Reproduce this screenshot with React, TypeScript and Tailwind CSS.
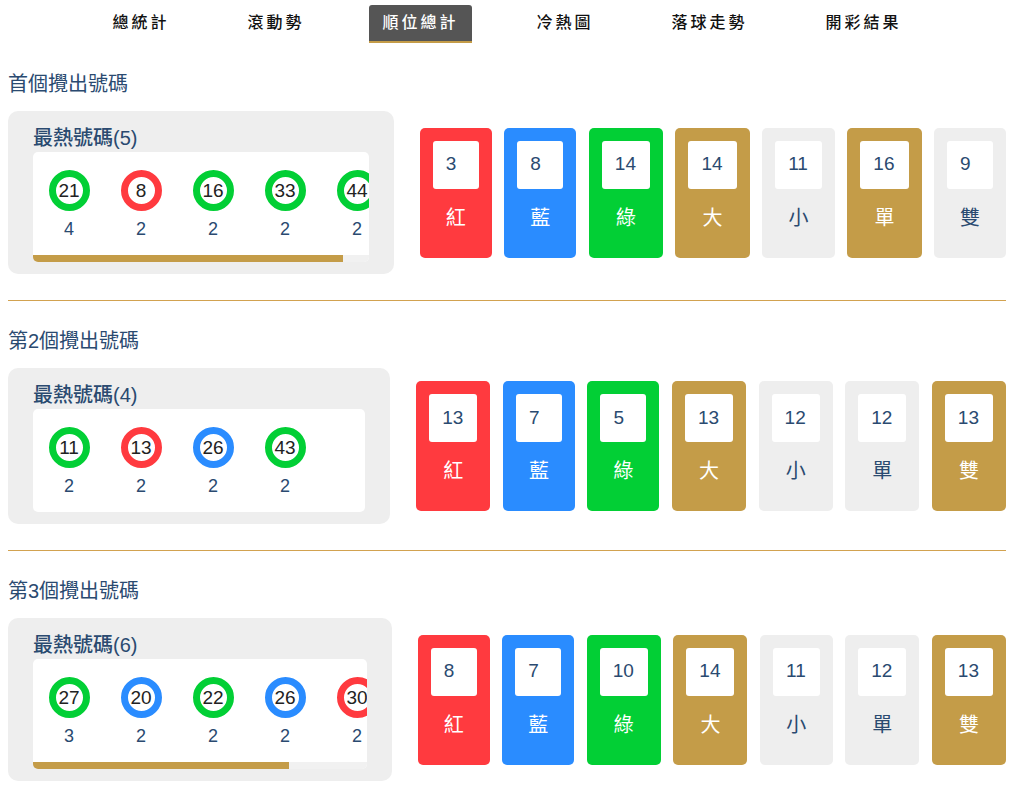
import React from "react";

type Tone = "red" | "blue" | "green" | "gold" | "gray";

const ringClass: Record<string, string> = {
  red: "border-[#ff3a3f]",
  blue: "border-[#2a8cff]",
  green: "border-[#02cf35]",
};

const cardClass: Record<Tone, string> = {
  red: "bg-[#ff3a3f] text-white",
  blue: "bg-[#2a8cff] text-white",
  green: "bg-[#02cf35] text-white",
  gold: "bg-[#c49c48] text-white",
  gray: "bg-[#eeeeee] text-[#2a4a70]",
};

interface Ball {
  n: number;
  c: "red" | "blue" | "green";
  times: number;
}

interface Section {
  title: string;
  balls: Ball[];
  cards: { label: string; value: number; tone: Tone }[];
}

const labels = ["紅", "藍", "綠", "大", "小", "單", "雙"];

function makeCards(values: number[], tones: Tone[]) {
  return values.map((v, i) => ({ label: labels[i], value: v, tone: tones[i] }));
}

const sections: Section[] = [
  {
    title: "首個攪出號碼",
    balls: [
      { n: 21, c: "green", times: 4 },
      { n: 8, c: "red", times: 2 },
      { n: 16, c: "green", times: 2 },
      { n: 33, c: "green", times: 2 },
      { n: 44, c: "green", times: 2 },
    ],
    cards: makeCards([3, 8, 14, 14, 11, 16, 9], ["red", "blue", "green", "gold", "gray", "gold", "gray"]),
  },
  {
    title: "第2個攪出號碼",
    balls: [
      { n: 11, c: "green", times: 2 },
      { n: 13, c: "red", times: 2 },
      { n: 26, c: "blue", times: 2 },
      { n: 43, c: "green", times: 2 },
    ],
    cards: makeCards([13, 7, 5, 13, 12, 12, 13], ["red", "blue", "green", "gold", "gray", "gray", "gold"]),
  },
  {
    title: "第3個攪出號碼",
    balls: [
      { n: 27, c: "green", times: 3 },
      { n: 20, c: "blue", times: 2 },
      { n: 22, c: "green", times: 2 },
      { n: 26, c: "blue", times: 2 },
      { n: 30, c: "red", times: 2 },
      { n: 35, c: "red", times: 2 },
    ],
    cards: makeCards([8, 7, 10, 14, 11, 12, 13], ["red", "blue", "green", "gold", "gray", "gray", "gold"]),
  },
];

const tabs = ["總統計", "滾動勢", "順位總計", "冷熱圖", "落球走勢", "開彩結果"];

// scroll strip: balls row clipped, thumb width = visible / total
function HotPanel({ balls }: { balls: Ball[] }) {
  const total = balls.length * 72;
  const overflow = total > 332;
  return (
    <div className="min-w-0 flex-1 rounded-[10px] bg-[#eeeeee] px-[25px] pt-[15px] pb-3">
      <div className="mb-[2px] text-[20px] leading-[24px] font-medium text-[#2a4a70]">最熱號碼({balls.length})</div>
      <div className="overflow-hidden rounded-[5px] bg-white">
        <div className="flex pt-[18px] pb-[16px]">
          {balls.map((b, i) => (
            <div key={i} className="flex w-[72px] shrink-0 flex-col items-center">
              <div
                className={`flex h-[41px] w-[41px] items-center justify-center rounded-full border-[7px] bg-white text-[19px] leading-none text-[#222] ${ringClass[b.c]}`}
              >
                {b.n}
              </div>
              <div className="mt-[8px] text-[18px] leading-[20px] text-[#2a4a70]">{b.times}</div>
            </div>
          ))}
        </div>
        {overflow && (
          <div className="h-[7px] bg-[#f1f1f1]">
            <div className="h-full bg-[#c49c48]" style={{ width: `${(332 / total) * 100}%` }} />
          </div>
        )}
      </div>
    </div>
  );
}

export default function App() {
  return (
    <div
      className="min-h-screen bg-white pl-2 pr-[17px]"
      style={{ fontFamily: '"Liberation Sans", "Noto Sans CJK TC", sans-serif' }}
    >
      <nav className="flex justify-center gap-[52px] pt-[5px]">
        {tabs.map((t) => {
          const active = t === "順位總計";
          return (
            <div
              key={t}
              className={
                active
                  ? "rounded-t-[3px] border-b-2 border-[#c49c48] bg-[#555555] px-[13px] py-[6px] text-[16px] leading-[24px] font-medium tracking-[3px] text-white"
                  : "border-b-2 border-transparent px-[13px] py-[6px] text-[16px] leading-[24px] font-medium tracking-[3px] text-[#111]"
              }
            >
              {t}
            </div>
          );
        })}
      </nav>

      {sections.map((s, si) => (
        <section key={si}>
          <h2 className={`${si === 0 ? "mt-[27px]" : "mt-[26px]"} mb-[13px] text-[20px] leading-[28px] text-[#2a4a70]`}>
            {s.title}
          </h2>
          <div className="flex items-center gap-[26px]">
            <HotPanel balls={s.balls} />
            <div className="flex gap-[12.5px]">
              {s.cards.map((c, ci) => (
                <div
                  key={ci}
                  className={`flex flex-col items-center rounded-[5px] px-[13px] pt-[13px] pb-[28px] ${cardClass[c.tone]}`}
                >
                  <div className="flex h-12 min-w-[46px] items-center rounded-[3px] bg-white pr-[14px] pl-[13px] text-[19px] text-[#2a4a70]">
                    {c.value}
                  </div>
                  <div className="mt-[17px] text-[20px] leading-[24px]">{c.label}</div>
                </div>
              ))}
            </div>
          </div>
          <div className="mt-[26px] h-px bg-[#d2a250]" />
        </section>
      ))}
    </div>
  );
}
